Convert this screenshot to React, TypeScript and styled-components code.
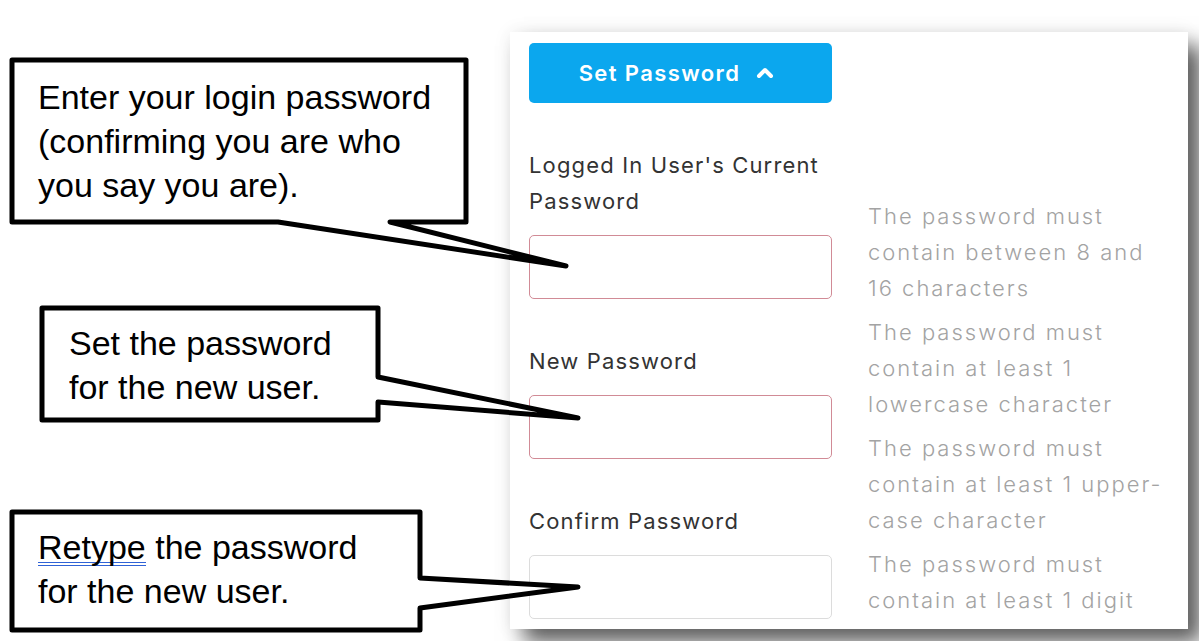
import React from "react";
import styled, { createGlobalStyle } from "styled-components";

const GlobalStyle = createGlobalStyle`
  html, body { margin: 0; padding: 0; background: #ffffff; }
  body { width: 1199px; height: 641px; overflow: hidden; }
`;

const Page = styled.div`
  position: relative;
  width: 1199px;
  height: 641px;
  box-sizing: border-box;
  padding: 32px 0 0 510px;
  overflow: hidden;
  background: #ffffff;
`;

const Panel = styled.div`
  width: 678px;
  height: 597px;
  box-sizing: border-box;
  padding: 11px 0 0 19px;
  background: #ffffff;
  display: flex;
  box-shadow: 14px 14px 20px rgba(0, 0, 0, 0.62), 0 0 18px rgba(0, 0, 0, 0.07);
  font-family: Inter, "Noto Sans", sans-serif;
`;

const LeftColumn = styled.div`
  width: 303px;
  flex-shrink: 0;
  display: flex;
  flex-direction: column;
`;

const ToggleButton = styled.button`
  height: 60px;
  width: 303px;
  border: none;
  border-radius: 5px;
  background: #0ba7ee;
  color: #ffffff;
  font-family: Inter, "Noto Sans", sans-serif;
  font-size: 22px;
  font-weight: 600;
  letter-spacing: 1.4px;
  display: flex;
  align-items: center;
  justify-content: center;
  gap: 16px;
  padding: 0 8px 0 0;
`;

const Chevron = styled.svg`
  display: block;
  margin-top: -2px;
`;

const Field = styled.div`
  margin-top: 44px;
  display: flex;
  flex-direction: column;
  gap: 16px;
`;

const Label = styled.label`
  font-size: 22px;
  letter-spacing: 1.15px;
  line-height: 36px;
  color: #333333;
  white-space: nowrap;
`;

const Input = styled.div<{ $invalid?: boolean }>`
  height: 64px;
  box-sizing: border-box;
  border-radius: 5px;
  border: 1.5px solid ${(p) => (p.$invalid ? "#d18b96" : "#dcdcdc")};
  background: #ffffff;
`;

const HintColumn = styled.div`
  margin-left: 36px;
  padding-top: 155px;
  display: flex;
  flex-direction: column;
  gap: 8px;
`;

const Hint = styled.div`
  font-size: 22px;
  font-weight: 300;
  letter-spacing: 2px;
  line-height: 36px;
  color: #a3a3a3;
  white-space: nowrap;
`;

const CalloutBox = styled.div`
  position: absolute;
  box-sizing: border-box;
  font-family: "Liberation Sans", Arial, sans-serif;
  font-size: 34px;
  line-height: 44px;
  color: #000000;
`;

const CalloutShape = styled.svg`
  position: absolute;
  left: 0;
  top: 0;
  overflow: visible;
  pointer-events: none;
`;

const CalloutText = styled.div`
  position: relative;
  white-space: nowrap;
`;

const Misspelled = styled.span`
  background-image: linear-gradient(#2f62d6, #2f62d6), linear-gradient(#2f62d6, #2f62d6);
  background-repeat: no-repeat;
  background-size: 100% 1px, 100% 1px;
  background-position: left bottom 3px, left bottom 0;
`;

type CalloutProps = {
  x: number;
  y: number;
  w: number;
  h: number;
  path: string;
  padX: number;
  padY: number;
  children: React.ReactNode;
};

function Callout({ x, y, w, h, path, padX, padY, children }: CalloutProps) {
  return (
    <CalloutBox style={{ left: x, top: y, width: w, height: h, padding: `${padY}px 0 0 ${padX}px` }}>
      <CalloutShape width={w} height={h}>
        <g transform={`translate(${-x} ${-y})`}>
          <path d={path} fill="#ffffff" stroke="#000000" strokeWidth={5} strokeLinejoin="round" strokeLinecap="round" />
        </g>
      </CalloutShape>
      <CalloutText>{children}</CalloutText>
    </CalloutBox>
  );
}

export default function App() {
  return (
    <>
      <GlobalStyle />
      <Page>
        <Panel>
          <LeftColumn>
            <ToggleButton>
              Set Password
              <Chevron width="18" height="14" viewBox="0 0 18 14">
                <polyline points="3,11 9,5 15,11" fill="none" stroke="#ffffff" strokeWidth="4" strokeLinecap="round" strokeLinejoin="round" />
              </Chevron>
            </ToggleButton>
            <Field>
              <Label>
                Logged In User's Current
                <br />
                Password
              </Label>
              <Input $invalid />
            </Field>
            <Field>
              <Label>New Password</Label>
              <Input $invalid />
            </Field>
            <Field>
              <Label>Confirm Password</Label>
              <Input />
            </Field>
          </LeftColumn>
          <HintColumn>
            <Hint>
              The password must
              <br />
              contain between 8 and
              <br />
              16 characters
            </Hint>
            <Hint>
              The password must
              <br />
              contain at least 1
              <br />
              lowercase character
            </Hint>
            <Hint>
              The password must
              <br />
              contain at least 1 upper-
              <br />
              case character
            </Hint>
            <Hint>
              The password must
              <br />
              contain at least 1 digit
            </Hint>
          </HintColumn>
        </Panel>

        <Callout x={12} y={60} w={454} h={162} padX={26} padY={15} path="M12 60 H466 V222 H390 L566 266 L278 222 H12 Z">
          Enter your login password
          <br />
          (confirming you are who
          <br />
          you say you are).
        </Callout>
        <Callout x={42} y={308} w={336} h={112} padX={27} padY={13} path="M42 308 H378 V377 L578 418 L378 402 V420 H42 Z">
          Set the password
          <br />
          for the new user.
        </Callout>
        <Callout x={12} y={512} w={408} h={118} padX={26} padY={13} path="M12 512 H420 V578 L578 587 L420 608 V630 H12 Z">
          <Misspelled>Retype</Misspelled> the password
          <br />
          for the new user.
        </Callout>
      </Page>
    </>
  );
}
